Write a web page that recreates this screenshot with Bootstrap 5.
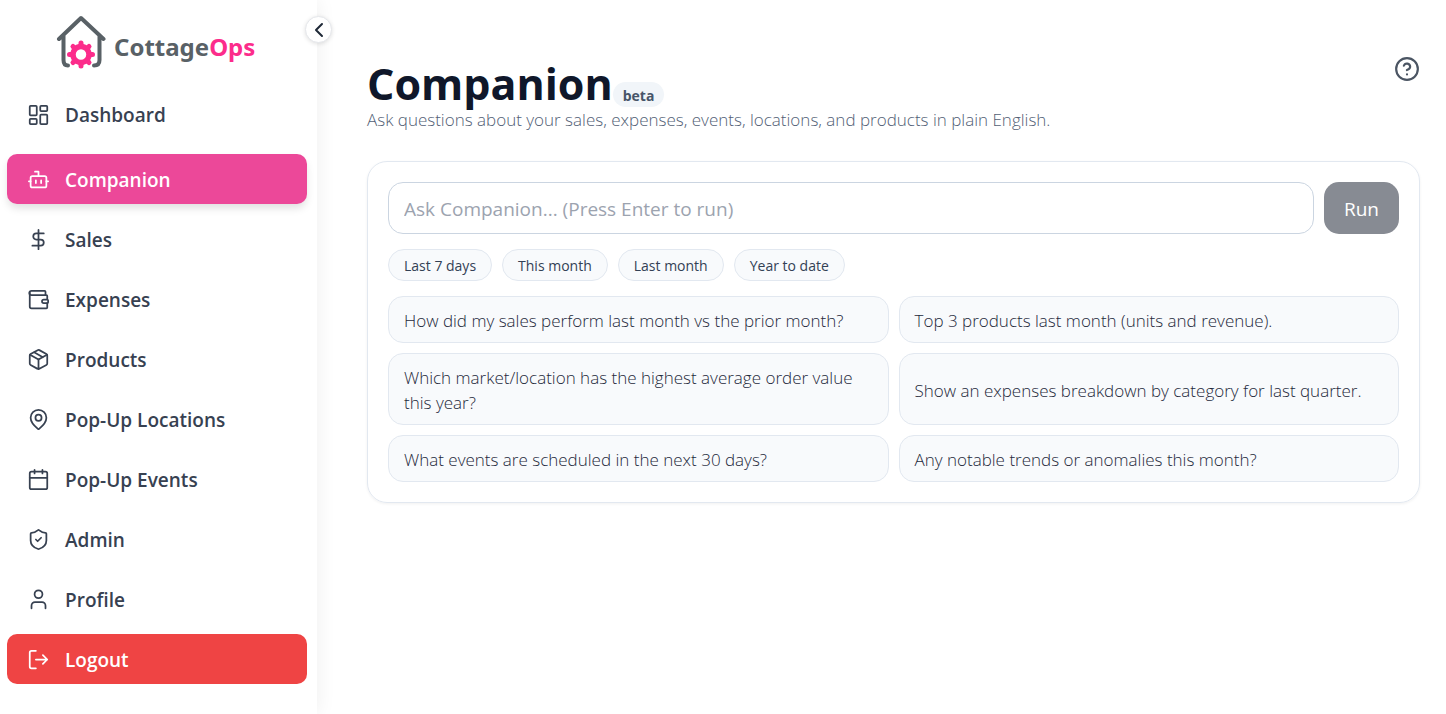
<!DOCTYPE html>
<html lang="en">
<head>
<meta charset="utf-8">
<meta name="viewport" content="width=device-width, initial-scale=1">
<title>CottageOps – Companion</title>
<link href="https://cdn.jsdelivr.net/npm/bootstrap@5.3.0/dist/css/bootstrap.min.css" rel="stylesheet">
<style>
  body { font-family: "Open Sans", "Noto Sans", sans-serif; color: #334155; background: #fff; }
  svg { display: block; flex: none; }
  .icon { fill: none; stroke: currentColor; stroke-width: 2; stroke-linecap: round; stroke-linejoin: round; }

  .sidebar { flex: 0 0 317px; padding: 15px 10px 0 7px; box-shadow: 0 0 19px rgba(0, 0, 0, .07); }
  .brand { padding-left: 49px; height: 54px; gap: 8px; color: #596166; }
  .brand-name { font: 700 24px/30px "Noto Sans", sans-serif; padding-top: 9px; }
  .brand-name span { color: #fc2c8b; }
  .collapse-btn { top: 16px; right: -15px; width: 27px; height: 27px; border: 1px solid #e5e7eb; color: #1f2937; box-shadow: 0 1px 4px rgba(0, 0, 0, .12); }

  .side-links { gap: 10px; padding-top: 20px; }
  .side-links .nav-link { height: 50px; padding: 2px 21px 0; gap: 16px; border-radius: 10px; font-size: 19px; line-height: 28px; font-weight: 600; color: #374151; }
  .side-links .nav-link svg { margin-bottom: 2px; }
  .side-links .first { margin-bottom: 5px; }
  .side-links .active { background: #ec4899; color: #fff; box-shadow: 0 5px 8px -1px rgba(0, 0, 0, .13); }
  .side-links .logout { background: #ef4444; color: #fff; }

  .content { padding: 56px 26px 40px 50px; }
  .heading { padding-top: 5px; }
  .page-title { font-size: 43px; line-height: 46px; font-weight: 700; color: #0f172a; }
  .beta { font-size: 14px; line-height: 19px; padding: 4px 10px 2px; border-radius: 13px; background: #f1f5f9; color: #475569; font-weight: 700; }
  .subtitle { font-size: 17px; line-height: 26px; font-weight: 300; color: #526075; }
  .help { color: #4b5563; }

  .panel { padding: 20px; margin-top: 28px; border: 1px solid #e2e8f0; border-radius: 20px; box-shadow: 0 1px 3px rgba(0, 0, 0, .06); gap: 15px; }
  .ask { height: 52px; padding: 2px 15px 0; border: 1px solid #cbd5e1; border-radius: 15px; font-size: 19px; color: #0f172a; }
  .ask::placeholder { color: #9ca3af; }
  .run { width: 75px; flex: none; border: 0; border-radius: 15px; background: #878b93; font-size: 19px; font-weight: 500; padding: 2px 0 0; }
  .run:disabled { color: #fff; }
  .gap-10 { gap: 10px; }
  .chip, .prompt { border: 1px solid #e2e8f0; background: #f8fafc; color: #334155; }
  .chip { height: 32px; padding: 2px 15px 0; border-radius: 16px; font-size: 14px; line-height: 20px; }
  .prompts { display: grid; grid-template-columns: 1fr 1fr; gap: 10px; }
  .prompt { padding: 11px 15px 9px; border-radius: 15px; font-size: 17px; line-height: 25px; font-weight: 300; color: #1e293b; text-align: left; }
</style>
</head>
<body>
<div class="d-flex min-vh-100">
  <aside class="sidebar position-relative">
    <div class="brand d-flex align-items-center">
      <svg width="50" height="54" viewBox="0 0 50 54" aria-hidden="true">
        <path d="M3 24 L25 3 L47.500 24 M7.500 21 V45 Q7.500 50.500 12 50.500 M43.500 21 V45 Q43.500 50.500 38 50.500" fill="none" stroke="#596166" stroke-width="4" stroke-linecap="round" stroke-linejoin="round"/>
        <circle cx="25" cy="39.500" r="8" fill="none" stroke="#fc2c8b" stroke-width="5.500"/>
        <path d="M25 28v1.500M25 49.500v1.500M13.500 39.500h1.500M35 39.500h1.500M17 31.500l1 1M32 46.500l1 1M33 31.500l-1 1M18 46.500l-1 1" stroke="#fc2c8b" stroke-width="5" stroke-linecap="round"/>
      </svg>
      <div class="brand-name">Cottage<span>Ops</span></div>
    </div>
    <button type="button" class="collapse-btn position-absolute rounded-circle bg-white p-0 d-flex align-items-center justify-content-center" aria-label="Collapse sidebar">
      <svg class="icon" width="24" height="24" viewBox="0 0 24 24"><path d="m15 18-6-6 6-6"/></svg>
    </button>
    <nav class="side-links nav flex-column">
      <a class="nav-link first d-flex align-items-center" href="#"><svg class="icon" width="21" height="21" viewBox="0 0 24 24"><rect x="2" y="2" width="8" height="11" rx="1"/><rect x="14" y="2" width="8" height="6" rx="1"/><rect x="14" y="12" width="8" height="11" rx="1"/><rect x="2" y="17" width="8" height="6" rx="1"/></svg>Dashboard</a>
      <a class="nav-link active d-flex align-items-center" href="#" aria-current="page"><svg class="icon" width="21" height="21" viewBox="0 0 24 24"><path d="M12 8V3H8"/><rect x="3" y="8" width="18" height="13" rx="2"/><path d="M1 14h2M21 14h2M15 13v3M9 13v3"/></svg>Companion</a>
      <a class="nav-link d-flex align-items-center" href="#"><svg class="icon" width="21" height="21" viewBox="0 0 24 24"><path d="M12 1v22M18 5H9.500a3.500 3.500 0 0 0 0 7h5a3.500 3.500 0 0 1 0 7H5"/></svg>Sales</a>
      <a class="nav-link d-flex align-items-center" href="#"><svg class="icon" width="21" height="21" viewBox="0 0 24 24"><path d="M20 7V3a1 1 0 0 0-1-1H4a2 2 0 0 0 0 5h17a1 1 0 0 1 1 1v4h-4a2 2 0 0 0 0 4h4a1 1 0 0 0 1-1v-2a1 1 0 0 0-1-1"/><path d="M2 4v16a2 2 0 0 0 2 2h17a1 1 0 0 0 1-1v-5"/></svg>Expenses</a>
      <a class="nav-link d-flex align-items-center" href="#"><svg class="icon" width="21" height="21" viewBox="0 0 24 24"><path d="M11 22.700a2 2 0 0 0 2 0l8-4.500A2 2 0 0 0 22 16.500v-9a2 2 0 0 0-1-1.700l-8-4.500a2 2 0 0 0-2 0L3 5.800A2 2 0 0 0 2 7.500v9a2 2 0 0 0 1 1.700zM12 23V12"/><path d="m2.300 6.500 9.700 5.500 9.700-5.500M7 3.800l10 5.700"/></svg>Products</a>
      <a class="nav-link d-flex align-items-center" href="#"><svg class="icon" width="21" height="21" viewBox="0 0 24 24"><path d="M21 10c0 5.500-6.200 11-8.300 12.700a1 1 0 0 1-1.400 0C9.200 21 3 15.500 3 10a9 9 0 0 1 18 0"/><circle cx="12" cy="10" r="3.500"/></svg>Pop-Up Locations</a>
      <a class="nav-link d-flex align-items-center" href="#"><svg class="icon" width="21" height="21" viewBox="0 0 24 24"><path d="M7.500 1v4M16.500 1v4M2 10h20"/><rect x="2" y="3" width="20" height="20" rx="2"/></svg>Pop-Up Events</a>
      <a class="nav-link d-flex align-items-center" href="#"><svg class="icon" width="21" height="21" viewBox="0 0 24 24"><path d="M21 13c0 5.500-4 8.300-8.600 9.900a1 1 0 0 1-.800 0C7 21.300 3 18.500 3 13V5.500a1 1 0 0 1 1-1c2.300 0 5-1.300 7-3a1.500 1.500 0 0 1 2 0c2 1.700 4.700 3 7 3a1 1 0 0 1 1 1z"/><path d="m9 12 2 2 4-4"/></svg>Admin</a>
      <a class="nav-link d-flex align-items-center" href="#"><svg class="icon" width="21" height="21" viewBox="0 0 24 24"><path d="M20 22v-3a4 4 0 0 0-4-4H8a4 4 0 0 0-4 4v3"/><circle cx="12" cy="6" r="4.500"/></svg>Profile</a>
      <button type="button" class="nav-link logout border-0 d-flex align-items-center"><svg class="icon" width="21" height="21" viewBox="0 0 24 24"><path d="M9 22H4a2 2 0 0 1-2-2V4a2 2 0 0 1 2-2h5M17 17l5-5-5-5M22 12H9"/></svg>Logout</button>
    </nav>
  </aside>

  <main class="content flex-grow-1">
    <header class="d-flex justify-content-between align-items-start">
      <div class="heading">
        <div class="d-flex align-items-end">
          <h1 class="page-title mb-0">Companion</h1><span class="beta">beta</span>
        </div>
        <p class="subtitle mb-0">Ask questions about your sales, expenses, events, locations, and products in plain English.</p>
      </div>
      <button type="button" class="help btn p-0 border-0" aria-label="Help"><svg class="icon" width="26" height="26" viewBox="0 0 24 24"><circle cx="12" cy="12" r="10"/><path d="M9.090 9a3 3 0 0 1 5.830 1c0 2-3 3-3 3M12 17h.010"/></svg></button>
    </header>

    <section class="panel d-flex flex-column">
      <form class="d-flex gap-10">
        <input type="text" class="ask form-control" placeholder="Ask Companion... (Press Enter to run)" aria-label="Ask Companion">
        <button type="submit" class="run" disabled>Run</button>
      </form>
      <div class="d-flex flex-wrap gap-10">
        <button type="button" class="chip">Last 7 days</button>
        <button type="button" class="chip">This month</button>
        <button type="button" class="chip">Last month</button>
        <button type="button" class="chip">Year to date</button>
      </div>
      <div class="prompts">
        <button type="button" class="prompt">How did my sales perform last month vs the prior month?</button>
        <button type="button" class="prompt">Top 3 products last month (units and revenue).</button>
        <button type="button" class="prompt">Which market/location has the highest average order value this year?</button>
        <button type="button" class="prompt">Show an expenses breakdown by category for last quarter.</button>
        <button type="button" class="prompt">What events are scheduled in the next 30 days?</button>
        <button type="button" class="prompt">Any notable trends or anomalies this month?</button>
      </div>
    </section>
  </main>
</div>
<script src="https://cdn.jsdelivr.net/npm/bootstrap@5.3.0/dist/js/bootstrap.bundle.min.js"></script>
</body>
</html>
